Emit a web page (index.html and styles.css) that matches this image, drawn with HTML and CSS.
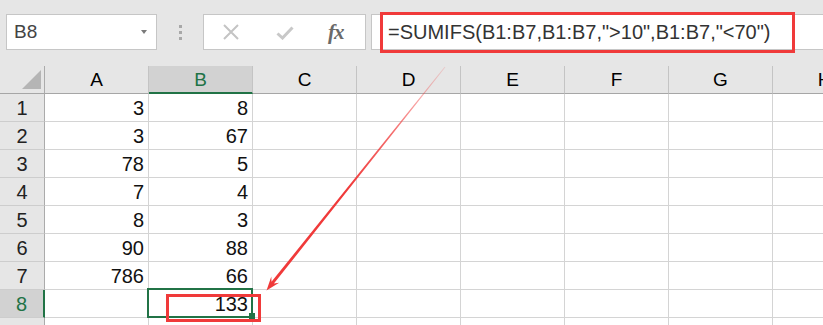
FILE: index.html
```html
<!DOCTYPE html>
<html>
<head>
  <title>SUMIFS</title>
  <link rel="stylesheet" href="styles.css">
</head>
<body>
  <div class="app">
    <div class="toolbar">
      <div class="namebox"><span>B8</span><span class="caret"></span></div>
      <div class="grip"><i></i><i></i><i></i></div>
      <div class="fbtns">
        <svg class="ico-x" width="16" height="16" viewBox="0 0 16 16"><path d="M1 1L15 15M15 1L1 15" stroke="#c4c4c4" stroke-width="2" fill="none"/></svg>
        <svg class="ico-ok" width="18" height="14" viewBox="0 0 18 14"><path d="M1.5 7.5L6.5 12L16.5 1.5" stroke="#c8c8c8" stroke-width="3" fill="none"/></svg>
        <span class="fx">fx</span>
      </div>
      <div class="fbar">
        <span class="formula">=SUMIFS(B1:B7,B1:B7,"&gt;10",B1:B7,"&lt;70")</span>
      </div>
    </div>

    <div class="sheet">
      <div class="row hdr">
        <div class="corner"><svg width="44" height="27" viewBox="0 0 44 27"><polygon points="41,4 41,23 22,23" fill="#b5b5b5"/></svg></div>
        <div>A</div><div class="on">B</div><div>C</div><div>D</div><div>E</div><div>F</div><div>G</div><div>H</div>
      </div>
      <div class="row"><div class="rh">1</div><div>3</div><div>8</div><div></div><div></div><div></div><div></div><div></div><div></div></div>
      <div class="row"><div class="rh">2</div><div>3</div><div>67</div><div></div><div></div><div></div><div></div><div></div><div></div></div>
      <div class="row"><div class="rh">3</div><div>78</div><div>5</div><div></div><div></div><div></div><div></div><div></div><div></div></div>
      <div class="row"><div class="rh">4</div><div>7</div><div>4</div><div></div><div></div><div></div><div></div><div></div><div></div></div>
      <div class="row"><div class="rh">5</div><div>8</div><div>3</div><div></div><div></div><div></div><div></div><div></div><div></div></div>
      <div class="row"><div class="rh">6</div><div>90</div><div>88</div><div></div><div></div><div></div><div></div><div></div><div></div></div>
      <div class="row"><div class="rh">7</div><div>786</div><div>66</div><div></div><div></div><div></div><div></div><div></div><div></div></div>
      <div class="row"><div class="rh on">8</div><div></div><div class="sel">133<span class="selbox"></span><span class="handle"></span><span class="mark"></span></div><div></div><div></div><div></div><div></div><div></div><div></div></div>
      <div class="row"><div class="rh"></div><div></div><div></div><div></div><div></div><div></div><div></div><div></div><div></div></div>
    </div>

    <svg class="arrow" width="823" height="325" viewBox="0 0 823 325">
      <defs>
        <linearGradient id="fade" gradientUnits="userSpaceOnUse" x1="445" y1="67" x2="267" y2="290">
          <stop offset="0" stop-color="#f03a3a" stop-opacity="0.15"/>
          <stop offset="0.3" stop-color="#f03a3a" stop-opacity="0.75"/>
          <stop offset="0.55" stop-color="#f03a3a" stop-opacity="1"/>
          <stop offset="1" stop-color="#f03a3a" stop-opacity="1"/>
        </linearGradient>
      </defs>
      <polygon fill="url(#fade)" points="444.6,66.7 445.4,67.3 273.9,283.6 279.1,282.7 266.5,290.5 271.3,276.5 271.5,281.8"/>
    </svg>
  </div>
</body>
</html>
```

FILE: styles.css
```css
* {
  box-sizing: border-box;
}
body {
  margin: 0;
  font-family: "Liberation Sans", Arial, sans-serif;
  background: #fff;
}
.app {
  position: relative;
  width: 823px;
  height: 325px;
  overflow: hidden;
  background: #e6e6e6;
}

/* formula bar */
.toolbar {
  display: flex;
  align-items: flex-start;
  height: 66px;
  padding: 14px 0 0 6px;
}
.namebox {
  display: flex;
  align-items: center;
  justify-content: space-between;
  flex: none;
  width: 151px;
  height: 36px;
  padding: 0 9px 0 7px;
  background: #fff;
  border: 1px solid #c6c6c6;
  font-size: 19px;
  color: #444;
}
.caret {
  width: 0;
  height: 0;
  border-left: 3px solid transparent;
  border-right: 3px solid transparent;
  border-top: 4px solid #7a7a7a;
}
.grip {
  display: flex;
  flex-direction: column;
  align-items: center;
  justify-content: center;
  gap: 3px;
  flex: none;
  width: 46px;
  height: 36px;
}
.grip i {
  width: 3px;
  height: 3px;
  background: #a8a8a8;
}
.fbtns {
  display: flex;
  align-items: center;
  flex: none;
  width: 163px;
  height: 36px;
  background: #fff;
  border: 1px solid #c6c6c6;
}
.ico-x {
  margin-left: 19px;
}
.ico-ok {
  margin-left: 37px;
  margin-top: 2px;
}
.fx {
  margin-left: 34px;
  font-family: "Liberation Serif", serif;
  font-style: italic;
  font-weight: bold;
  font-size: 21px;
  color: #6a6a6a;
  letter-spacing: -1px;
}
.fbar {
  display: flex;
  align-items: center;
  flex: 1;
  height: 36px;
  margin-left: 5px;
  margin-right: -10px;
  padding-left: 8px;
  background: #fff;
  border: 1px solid #c6c6c6;
  border-right: none;
}
.formula {
  flex: none;
  width: 415px;
  height: 41px;
  padding-left: 5px;
  border: 3px solid #f03a3a;
  font-size: 20px;
  line-height: 34px;
  color: #333;
  white-space: nowrap;
}

/* grid */
.row {
  display: grid;
  grid-template-columns: 45px repeat(8, 104px);
  height: 28px;
}
.row > div {
  position: relative;
  height: 28px;
  padding: 2px 4px 0;
  background: #fff;
  border-right: 1px solid #d4d4d4;
  border-bottom: 1px solid #d4d4d4;
  font-size: 20px;
  line-height: 25px;
  text-align: right;
  color: #111;
}
.row > .rh {
  padding: 2px 0 0;
  background: #e6e6e6;
  border-right: 1px solid #ababab;
  border-bottom: 1px solid #cdcdcd;
  text-align: center;
  color: #222;
}
.row > .rh.on {
  background: #d2d2d2;
  border-right: 2px solid #217346;
  color: #217346;
}
.hdr > div {
  padding: 1px 0 0;
  background: #e6e6e6;
  border-right: 1px solid #c4c4c4;
  border-bottom: 1px solid #a6a6a6;
  font-size: 19px;
  text-align: center;
  color: #000;
}
.hdr > .corner {
  padding: 0;
  border-right: 1px solid #ababab;
}
.corner svg {
  display: block;
}
.hdr > .on {
  background: #d2d2d2;
  border-bottom: 2px solid #217346;
  color: #217346;
}

/* selected cell B8 */
.row > .sel {
  z-index: 2;
}
.selbox {
  position: absolute;
  top: -2px;
  left: -2px;
  right: -1px;
  bottom: -1px;
  border: 2px solid #217346;
}
.handle {
  position: absolute;
  left: 100px;
  top: 23px;
  width: 6px;
  height: 6px;
  background: #217346;
}
.mark {
  position: absolute;
  left: 17px;
  top: 4px;
  width: 95px;
  height: 28px;
  border: 3px solid #f03a3a;
}

.arrow {
  position: absolute;
  top: 0;
  left: 0;
  pointer-events: none;
}
```
